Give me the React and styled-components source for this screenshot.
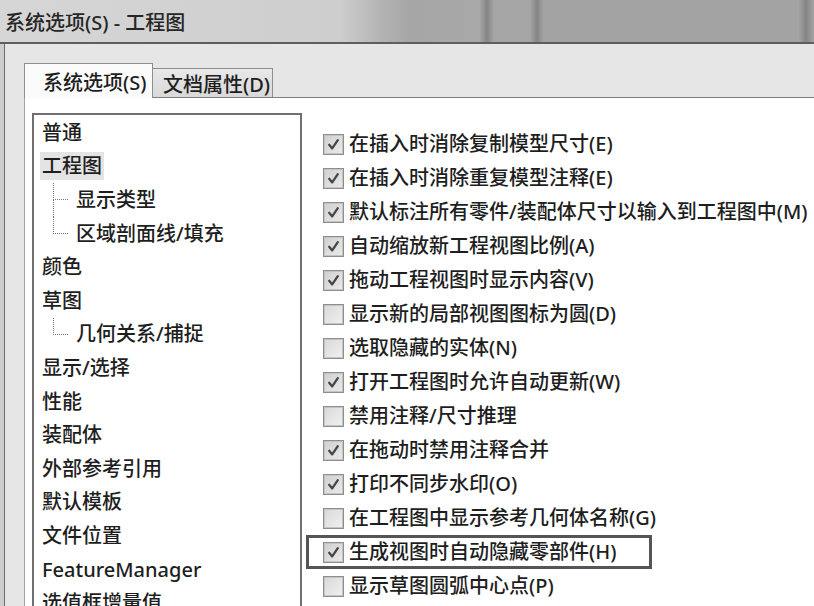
import React from 'react';
import styled, { createGlobalStyle } from 'styled-components';

const GlobalStyle = createGlobalStyle`
  html, body {
    margin: 0;
    padding: 0;
    background: #ffffff;
  }
  body {
    font-family: "Noto Sans", "Noto Sans CJK SC", sans-serif;
    color: #1e1e1e;
  }
`;

const treeItems = [
  { label: '普通' },
  { label: '工程图', selected: true },
  { label: '显示类型', child: true },
  { label: '区域剖面线/填充', child: true, last: true },
  { label: '颜色' },
  { label: '草图' },
  { label: '几何关系/捕捉', child: true, last: true },
  { label: '显示/选择' },
  { label: '性能' },
  { label: '装配体' },
  { label: '外部参考引用' },
  { label: '默认模板' },
  { label: '文件位置' },
  { label: 'FeatureManager' },
  { label: '选值框增量值' },
];

const options = [
  { label: '在插入时消除复制模型尺寸(E)', checked: true },
  { label: '在插入时消除重复模型注释(E)', checked: true },
  { label: '默认标注所有零件/装配体尺寸以输入到工程图中(M)', checked: true },
  { label: '自动缩放新工程视图比例(A)', checked: true },
  { label: '拖动工程视图时显示内容(V)', checked: true },
  { label: '显示新的局部视图图标为圆(D)', checked: false },
  { label: '选取隐藏的实体(N)', checked: false },
  { label: '打开工程图时允许自动更新(W)', checked: true },
  { label: '禁用注释/尺寸推理', checked: false },
  { label: '在拖动时禁用注释合并', checked: true },
  { label: '打印不同步水印(O)', checked: true },
  { label: '在工程图中显示参考几何体名称(G)', checked: false },
  { label: '生成视图时自动隐藏零部件(H)', checked: true, marked: true },
  { label: '显示草图圆弧中心点(P)', checked: false },
];

const App = () => {
  return (
    <>
      <GlobalStyle />
      <Screen>
        <TitleBar>
          <TitleText>系统选项(S) - 工程图</TitleText>
          <Streak $w={14} />
          <Gap $w={36} />
          <Streak $w={14} />
          <Filler />
          <Streak $w={16} />
        </TitleBar>
        <Body>
          <Frame>
            <TabStrip>
              <Tab $active>系统选项(S)</Tab>
              <Tab>文档属性(D)</Tab>
            </TabStrip>
            <Panel>
              <TreeBox>
                {treeItems.map((item) => (
                  <TreeRow key={item.label}>
                    {item.child && (
                      <Connector>
                        <ConnectorTop />
                        <ConnectorBottom $last={item.last} />
                      </Connector>
                    )}
                    <TreeLabel $selected={item.selected}>{item.label}</TreeLabel>
                  </TreeRow>
                ))}
              </TreeBox>
              <OptionList>
                {options.map((opt) => (
                  <OptionRow key={opt.label} $marked={opt.marked}>
                    <CheckBox $checked={opt.checked}>
                      {opt.checked && (
                        <svg width="13" height="13" viewBox="0 0 13 13">
                          <path
                            d="M2.2 6.8 L5.2 10.4 L10.8 2.2"
                            fill="none"
                            stroke="#474747"
                            strokeWidth="2.3"
                            strokeLinecap="round"
                            strokeLinejoin="round"
                          />
                        </svg>
                      )}
                    </CheckBox>
                    <OptionLabel>{opt.label}</OptionLabel>
                  </OptionRow>
                ))}
              </OptionList>
            </Panel>
          </Frame>
        </Body>
      </Screen>
    </>
  );
};

const Screen = styled.div`
  width: 814px;
  height: 606px;
  overflow: hidden;
  display: flex;
  flex-direction: column;
  background: #ffffff;
`;

const TitleBar = styled.div`
  flex-shrink: 0;
  height: 44px;
  box-sizing: border-box;
  display: flex;
  align-items: stretch;
  border-bottom: 2px solid #5e5e5e;
  background-color: #a3a3a3;
`;

const TitleText = styled.div`
  width: 480px;
  flex-shrink: 0;
  box-sizing: border-box;
  padding-left: 5px;
  display: flex;
  align-items: center;
  font-size: 20px;
  font-weight: 500;
  color: #262626;
  background-color: #d2d2d2;
  background-image: linear-gradient(
    to right,
    #d6d6d6 0px,
    #cecece 340px,
    #b4b4b4 380px,
    #a6a6a6 410px,
    #a8a8a8 480px
  );
`;

const Streak = styled.div`
  width: ${(p) => p.$w}px;
  flex-shrink: 0;
  background-image: linear-gradient(to right, #a5a5a5, #858585 50%, #a5a5a5);
`;

const Gap = styled.div`
  width: ${(p) => p.$w}px;
  flex-shrink: 0;
  background-color: #a6a6a6;
`;

const Filler = styled.div`
  flex: 1;
  background-color: #a3a3a3;
`;

const Body = styled.div`
  flex: 1;
  display: flex;
  background: #cdcdcd;
  min-height: 0;
`;

const Frame = styled.div`
  flex: 1;
  margin-left: 4px;
  border-left: 1px solid #6b6b6b;
  padding-left: 19px;
  background: #e6e6e6;
  display: flex;
  flex-direction: column;
  min-height: 0;
`;

const TabStrip = styled.div`
  flex-shrink: 0;
  height: 53px;
  display: flex;
  align-items: flex-end;
`;

const Tab = styled.div`
  box-sizing: border-box;
  display: flex;
  align-items: center;
  font-size: 20px;
  font-weight: 500;
  color: #1e1e1e;
  border: 1px solid #8f8f8f;
  border-bottom: none;
  position: relative;
  z-index: ${(p) => (p.$active ? 1 : 0)};
  width: ${(p) => (p.$active ? '129px' : '120px')};
  height: ${(p) => (p.$active ? '35px' : '29px')};
  padding-left: ${(p) => (p.$active ? '18px' : '10px')};
  margin-bottom: ${(p) => (p.$active ? '-1px' : '0')};
  background: ${(p) =>
    p.$active ? '#fbfbfb' : 'linear-gradient(#e8e8e8, #d9d9d9)'};
  border-left-width: ${(p) => (p.$active ? '1px' : '0')};
`;

const Panel = styled.div`
  flex: 1;
  min-height: 0;
  display: flex;
  align-items: flex-start;
  gap: 21px;
  background: #ffffff;
  border-top: 1px solid #7e7e7e;
  border-left: 1px solid #a3a3a3;
  padding-left: 7px;
`;

const TreeBox = styled.div`
  flex-shrink: 0;
  width: 270px;
  height: 520px;
  box-sizing: border-box;
  margin-top: 15px;
  border: 2px solid #707070;
  padding-left: 6px;
  padding-top: 1px;
  background: #ffffff;
  overflow: hidden;
`;

const TreeRow = styled.div`
  height: 33.6px;
  display: flex;
  align-items: stretch;
`;

const Connector = styled.span`
  width: 15px;
  margin-left: 13px;
  margin-right: 6px;
  display: flex;
  flex-direction: column;
`;

const ConnectorTop = styled.span`
  flex: 1;
  border-left: 1px dotted #777;
  border-bottom: 1px dotted #777;
`;

const ConnectorBottom = styled.span`
  flex: 1;
  border-left: 1px dotted ${(p) => (p.$last ? 'transparent' : '#777')};
`;

const TreeLabel = styled.span`
  align-self: center;
  font-size: 20px;
  font-weight: 500;
  line-height: 28px;
  padding: 0 2px;
  color: #1e1e1e;
  background: ${(p) => (p.$selected ? '#e4e4e4' : 'transparent')};
`;

const OptionList = styled.div`
  margin-top: 29px;
  display: flex;
  flex-direction: column;
  align-items: flex-start;
`;

const OptionRow = styled.div`
  height: 34px;
  box-sizing: border-box;
  display: flex;
  align-items: center;
  gap: 5px;
  margin-left: -17px;
  padding-left: 17px;
  padding-right: 36px;
  outline: ${(p) => (p.$marked ? '3px solid #555555' : 'none')};
  outline-offset: -3px;
`;

const CheckBox = styled.span`
  width: 21px;
  height: 21px;
  box-sizing: border-box;
  flex-shrink: 0;
  display: flex;
  align-items: center;
  justify-content: center;
  border: 1px solid #8e8e8e;
  box-shadow: inset 0 0 0 1px #c4c4c4;
  background: ${(p) =>
    p.$checked
      ? 'linear-gradient(135deg, #cfcfcf, #ebebeb)'
      : 'linear-gradient(135deg, #d8d8d8, #f1f1f1)'};
`;

const OptionLabel = styled.span`
  font-size: 20px;
  font-weight: 500;
  line-height: 28px;
  color: #1e1e1e;
  white-space: nowrap;
`;

export default App;
